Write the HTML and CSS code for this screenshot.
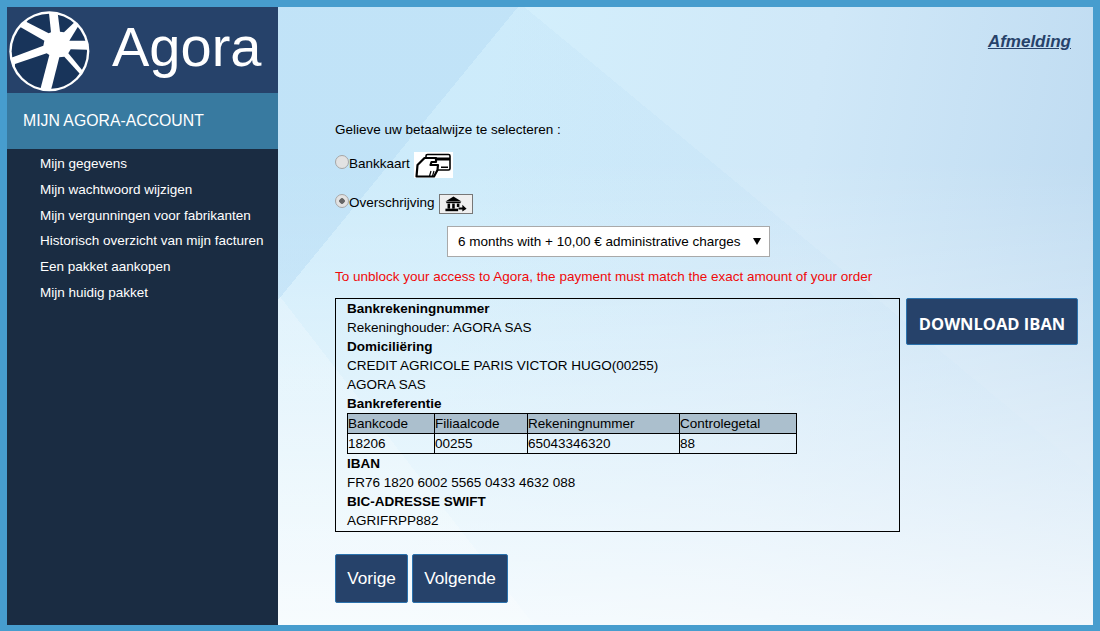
FILE: index.html
```html
<!DOCTYPE html>
<html lang="en">
<head>
    <meta charset="UTF-8">
    <title>Agora</title>
    <link rel="stylesheet" href="styles.css">
</head>
<body>
    <div class="frame">
        <div class="side">
            <div class="logo_bar">
                <svg class="logo_wheel" width="84" height="84" viewBox="24 33 252 252">
                    <defs>
                        <clipPath id="wheel_in"><circle cx="148" cy="154" r="113"/></clipPath>
                    </defs>
                    <circle cx="148" cy="154" r="120" fill="#fff"/>
                    <g fill="#18345a" clip-path="url(#wheel_in)">
                        <polygon points="80,66 146,100 153,97 146,30 80,30"/>
                        <polygon points="172,30 180,95 192,97 225,65 225,30"/>
                        <polygon points="235,78 208,122 280,122 280,78"/>
                        <polygon points="62,82 133,122 130,137 38,172 20,172 20,82"/>
                        <polygon points="212,148 280,150 280,215 248,212 205,160"/>
                        <polygon points="178,172 193,170 240,222 240,290 148,290"/>
                        <polygon points="140,160 148,165 122,264 40,264 45,192"/>
                    </g>
                </svg>
                <span class="logo_name">Agora</span>
            </div>
            <div class="side_title">MIJN AGORA-ACCOUNT</div>
            <ul class="side_menu">
                <li>Mijn gegevens</li>
                <li>Mijn wachtwoord wijzigen</li>
                <li>Mijn vergunningen voor fabrikanten</li>
                <li>Historisch overzicht van mijn facturen</li>
                <li>Een pakket aankopen</li>
                <li>Mijn huidig pakket</li>
            </ul>
        </div>
        <div class="main">
            <div class="top_link"><a href="#">Afmelding</a></div>
            <p class="ask">Gelieve uw betaalwijze te selecteren :</p>
            <div class="pay_row pay_card">
                <span class="radio"></span><span class="pay_label">Bankkaart</span>
                <span class="card_icon">
                    <svg width="39" height="26" viewBox="0 0 39 26">
                        <path d="M12 6V4C12 3 12.500 2.500 13.500 2.500H34.500C35.500 2.500 36 3 36 4V16.500C36 17.500 35.500 18 34.500 18H24" fill="none" stroke="#000" stroke-width="1.600"/>
                        <rect x="12" y="5.500" width="24" height="3" fill="#000"/>
                        <rect x="27" y="14.500" width="7" height="1.500" fill="#000"/>
                        <path d="M3.500 13L10.500 6H22V10H17.500L16.500 13H24L23.500 18L20 24.500H2.500Z" fill="#fff" stroke="#000" stroke-width="2.200" stroke-linejoin="round"/>
                        <path d="M17 19L15.500 24M20 19L18.500 24" stroke="#000" stroke-width="1.200"/>
                    </svg>
                </span>
            </div>
            <div class="pay_row pay_transfer">
                <span class="radio radio_on"></span><span class="pay_label">Overschrijving</span>
                <span class="bank_icon">
                    <svg width="22" height="16" viewBox="0 0 26 18">
                        <path d="M0.500 6L10 0L19.500 6Z" fill="#000"/>
                        <rect x="1.500" y="6.500" width="17" height="1.500" fill="#000"/>
                        <rect x="3" y="8.500" width="3" height="6" fill="#000"/>
                        <rect x="8.500" y="8.500" width="3" height="6" fill="#000"/>
                        <rect x="14" y="8.500" width="3" height="4" fill="#000"/>
                        <rect x="0.500" y="14.500" width="15" height="3" fill="#000"/>
                        <path d="M16 13H20.500V10L25.500 14.500L20.500 18V15.500H16Z" fill="#000"/>
                    </svg>
                </span>
            </div>
            <div class="pick_row">
                <div class="pick">
                    <span>6 months with + 10,00 € administrative charges</span>
                    <span class="pick_arrow"></span>
                </div>
            </div>
            <p class="warn">To unblock your access to Agora, the payment must match the exact amount of your order</p>
            <div class="bank_row">
                <div class="bank_box">
                    <div class="b">Bankrekeningnummer</div>
                    <div>Rekeninghouder: AGORA SAS</div>
                    <div class="b">Domiciliëring</div>
                    <div>CREDIT AGRICOLE PARIS VICTOR HUGO(00255)</div>
                    <div>AGORA SAS</div>
                    <div class="b">Bankreferentie</div>
                    <table class="ref">
                        <tr>
                            <th class="c1">Bankcode</th>
                            <th class="c2">Filiaalcode</th>
                            <th class="c3">Rekeningnummer</th>
                            <th>Controlegetal</th>
                        </tr>
                        <tr>
                            <td>18206</td>
                            <td>00255</td>
                            <td>65043346320</td>
                            <td>88</td>
                        </tr>
                    </table>
                    <div class="b">IBAN</div>
                    <div>FR76 1820 6002 5565 0433 4632 088</div>
                    <div class="b">BIC-ADRESSE SWIFT</div>
                    <div>AGRIFRPP882</div>
                </div>
                <a class="btn btn_iban" href="#">DOWNLOAD IBAN</a>
            </div>
            <div class="nav_btns">
                <a class="btn btn_prev" href="#">Vorige</a>
                <a class="btn btn_next" href="#">Volgende</a>
            </div>
        </div>
    </div>
</body>
</html>
```

FILE: styles.css
```css
html,body{
  margin: 0;
  padding: 0;
}
body{
  width: 1100px;
  height: 631px;
  overflow: hidden;
  font-family: "Liberation Sans", Arial, sans-serif;
  font-size: 13.5px;
  color: #000;
}
.frame{
  box-sizing: border-box;
  width: 1100px;
  height: 631px;
  border: 7px solid #479dce;
  border-bottom-width: 6px;
  display: flex;
}
.side{
  width: 271px;
  flex-shrink: 0;
  background-color: #1a2c42;
}
.logo_bar{
  height: 86px;
  background-color: #26426a;
  display: flex;
  align-items: flex-start;
}
.logo_wheel{
  margin-left: 1px;
  margin-top: 4px;
  flex-shrink: 0;
}
.logo_name{
  margin-left: 20px;
  color: #fff;
  font-size: 56px;
  line-height: 76px;
  margin-top: 2px;
}
.side_title{
  height: 56px;
  line-height: 56px;
  padding-left: 16px;
  background-color: #387aa0;
  color: #fff;
  font-size: 15.8px;
}
.side_menu{
  list-style: none;
  margin: 0;
  padding: 2px 0 0 33px;
  color: #fff;
}
.side_menu li{
  height: 25.8px;
  line-height: 26px;
}
.main{
  flex-grow: 1;
  padding-left: 57px;
  background-color: #dcedfa;
  background-repeat: no-repeat;
  background-position: 0 0, 0 100%, 0 0, 0 0, 0 0;
  background-size: 240px 293px, 256px 331px, 100% 100%, 100% 100%, 100% 100%;
  background-image:
    linear-gradient(to bottom right, rgba(175,215,243,0.4) 50%, rgba(175,215,243,0) 50%),
    linear-gradient(to top right, rgba(255,255,255,0.22) 50%, rgba(255,255,255,0) 50%),
    linear-gradient(to bottom, rgba(255,255,255,0) 25%, rgba(255,255,255,0.8) 100%),
    linear-gradient(219.6deg, rgba(175,215,243,0) 36.4%, rgba(175,215,243,0.16) 36.4%),
    linear-gradient(100deg, #d3effc 25%, #d0e8f8 60%, #bcd9f0 100%);
}
.top_link{
  height: 34px;
  padding: 25px 22px 0 0;
  text-align: right;
  font-size: 17px;
  font-weight: bold;
  font-style: italic;
}
.top_link a{
  color: #26426a;
}
.ask{
  margin: 56px 0 0;
  line-height: 16px;
}
.pay_row{
  display: flex;
  align-items: center;
}
.pay_card{
  margin-top: 14px;
  height: 26px;
}
.pay_transfer{
  margin-top: 16px;
  height: 20px;
}
.pay_label{
  margin-top: -3px;
}
.radio{
  box-sizing: border-box;
  width: 14px;
  height: 14px;
  border: 1px solid #a6a6a6;
  border-radius: 50%;
  background-color: #e2e2e2;
  margin-top: -6px;
}
.radio_on{
  background-image: radial-gradient(circle, #666 0, #666 2.500px, #e2e2e2 3px);
}
.card_icon{
  margin-left: 4px;
  width: 39px;
  height: 26px;
  background-color: #fff;
  display: flex;
  align-items: center;
}
.bank_icon{
  box-sizing: border-box;
  margin-left: 4px;
  width: 34px;
  height: 20px;
  border: 1px solid #777;
  background-color: #efefef;
  display: flex;
  align-items: center;
  justify-content: center;
}
.pick_row{
  margin: 12px 0 0 112px;
}
.pick{
  box-sizing: border-box;
  width: 323px;
  height: 31px;
  border: 1px solid #a9a9a9;
  background-color: #fff;
  padding: 0 10px;
  display: flex;
  align-items: center;
  justify-content: space-between;
}
.pick_arrow{
  width: 0;
  height: 0;
  border-left: 4px solid transparent;
  border-right: 4px solid transparent;
  border-top: 7px solid #000;
  margin-right: -2px;
}
.warn{
  margin: 12px 0 0;
  line-height: 16px;
  color: #f00a0a;
}
.bank_row{
  display: flex;
  align-items: flex-start;
  margin-top: 13px;
}
.bank_box{
  box-sizing: border-box;
  width: 565px;
  height: 234px;
  border: 1px solid #000;
  padding: 0 0 0 11px;
  line-height: 19px;
}
.b{
  font-weight: bold;
}
.ref{
  border-collapse: collapse;
  width: 450px;
  table-layout: fixed;
  margin: 0;
}
.ref th,
.ref td{
  border: 1px solid #000;
  padding: 0;
  height: 19px;
  font-weight: normal;
  text-align: left;
  line-height: 19px;
}
.ref th{
  background-color: #abbfcd;
}
.c1{ width: 86px; }
.c2{ width: 92px; }
.c3{ width: 151px; }
.btn{
  box-sizing: border-box;
  display: flex;
  align-items: center;
  justify-content: center;
  background-color: #26426a;
  border: 1px solid #2b72ad;
  border-radius: 2px;
  color: #fff;
  text-decoration: none;
}
.btn_iban{
  margin-left: 6px;
  width: 172px;
  height: 47px;
  padding-top: 3px;
  font-family: "Open Sans", sans-serif;
  font-weight: bold;
  font-size: 16.5px;
}
.nav_btns{
  display: flex;
  gap: 4px;
  margin-top: 22px;
}
.btn_prev,
.btn_next{
  height: 49px;
  font-size: 17.2px;
}
.btn_prev{ width: 73px; }
.btn_next{ width: 96px; }
```
